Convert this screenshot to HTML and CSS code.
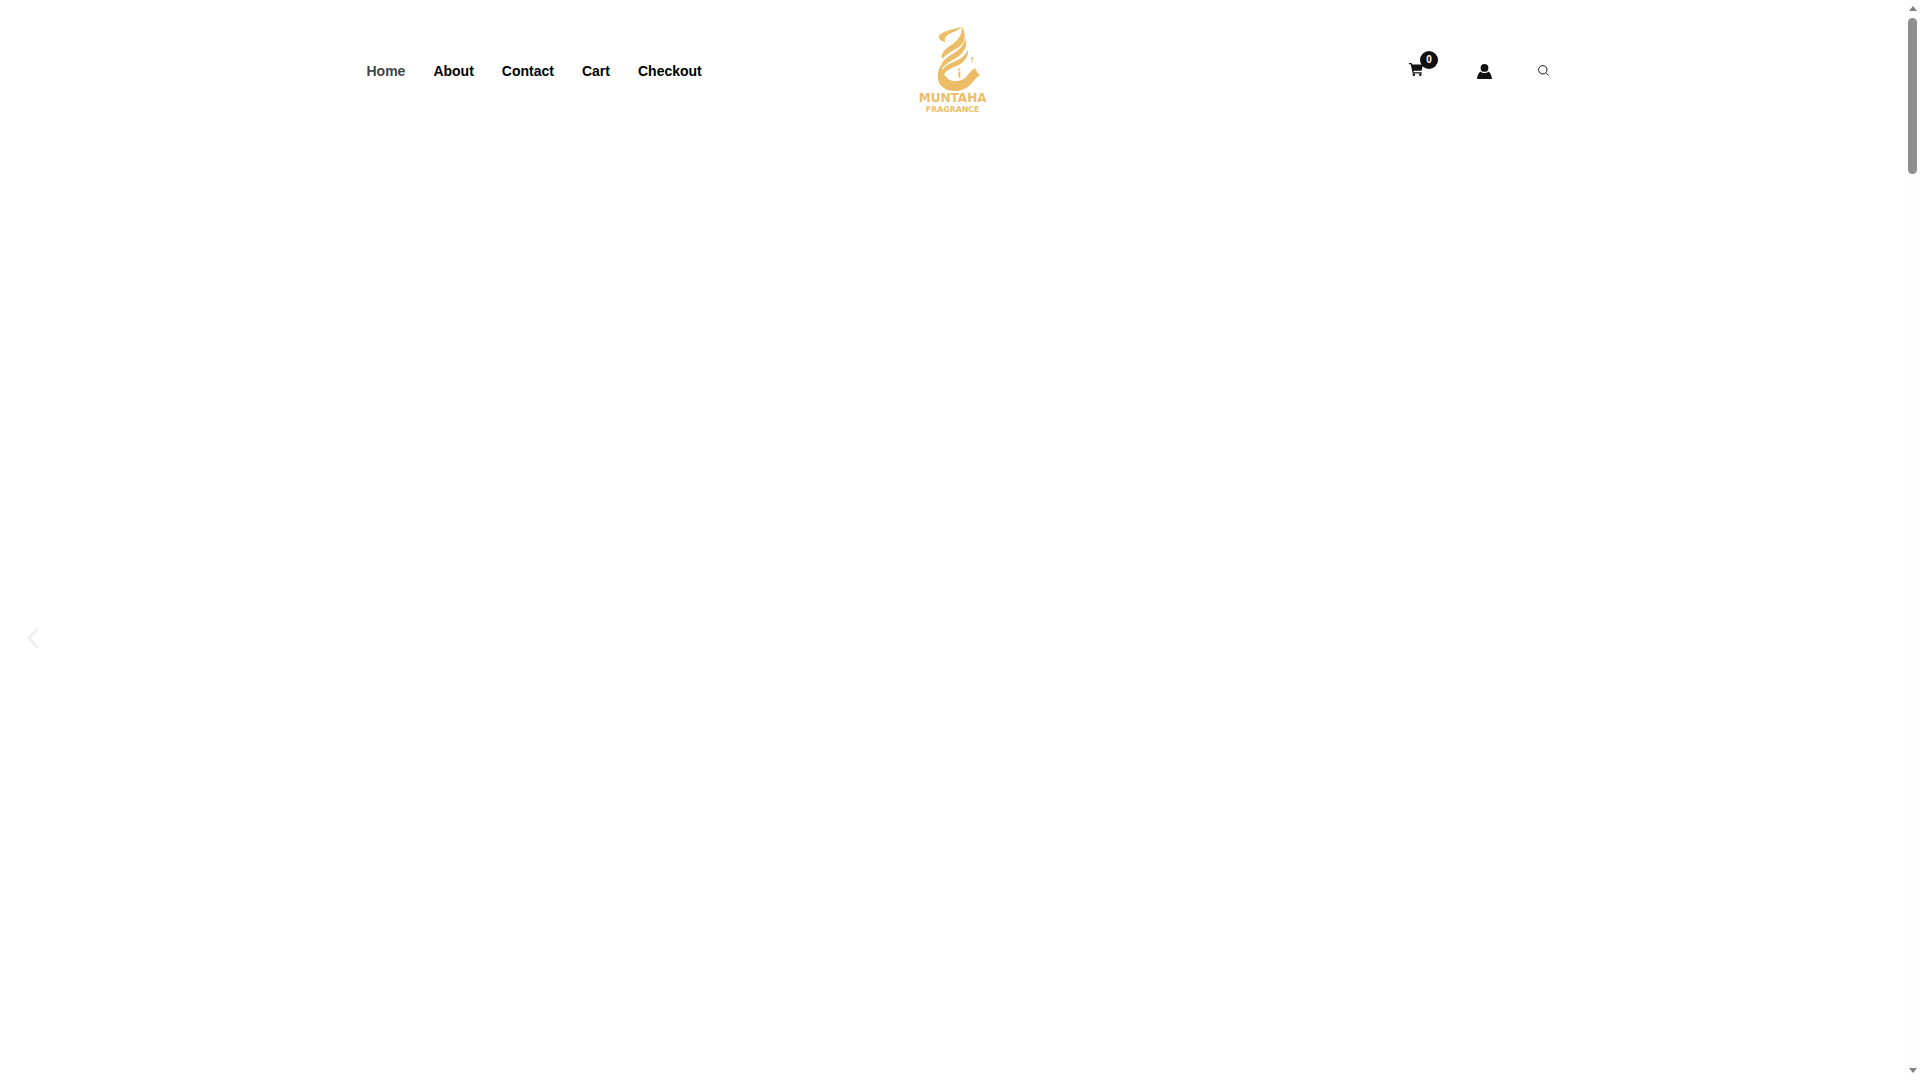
FILE: index.html
```html
<!DOCTYPE html>
<html lang="en">
<head>
    <meta charset="UTF-8">
    <meta name="viewport" content="width=device-width, initial-scale=1.0">
    <title>Muntaha Fragrance</title>
    <link rel="stylesheet" href="styles.css">
</head>
<body>

    <header class="site-header">
        <nav class="main-nav">
            <a class="active" href="#home">Home</a>
            <a href="#about">About</a>
            <a href="#contact">Contact</a>
            <a href="#cart">Cart</a>
            <a href="#checkout">Checkout</a>
        </nav>

        <a class="logo" href="#home">
            <svg viewBox="0 0 330 330" width="110" height="110" aria-label="Muntaha Fragrance">
                <g fill="#ecbd66">
                    <path d="M118 60C138 44 165 42 186 35 178 46 160 50 146 58 136 64 132 72 136 82 122 78 112 70 118 60z"/>
                    <path d="M186 36C196 52 198 72 186 88 172 104 146 110 126 132 122 112 138 100 154 90 172 78 186 62 186 36z"/>
                    <path d="M196 70C204 92 194 110 176 124 160 136 138 142 124 164 120 142 136 130 156 118 176 106 192 92 196 70z"/>
                    <path d="M204 104C206 124 194 140 176 150 160 158 140 162 128 184 120 164 134 152 154 144 176 134 196 124 204 104z"/>
                    <path d="M122 150C108 176 110 206 132 220 154 234 190 230 210 210 220 200 228 188 240 180 232 176 230 168 226 160 214 164 208 176 200 184 186 198 168 202 152 196 136 190 128 172 122 150z"/>
                    <circle cx="217" cy="130" r="3.500"/>
                    <circle cx="216" cy="139" r="2.500"/>
                    <circle cx="178" cy="163" r="3.500"/>
                    <rect x="175" y="170" width="6" height="18"/>
                </g>
                <text class="logo-name" x="158" y="261">MUNTAHA</text>
                <text class="logo-sub" x="158" y="291">FRAGRANCE</text>
            </svg>
        </a>

        <div class="header-icons">
            <a class="cart-link" href="#cart">
                <svg viewBox="0 0 14 13" width="14" height="13">
                    <path fill="#111" d="M0 0h2.600l.5 1.600H14l-1.400 6.200H4.500l.3 1.400h8v1.200H3.700L1.700 1.200H0z"/>
                    <circle fill="#111" cx="4.800" cy="11.700" r="1.300"/>
                    <circle fill="#111" cx="11.300" cy="11.700" r="1.300"/>
                </svg>
                <span class="cart-count">0</span>
            </a>
            <a class="user-link" href="#account">
                <svg viewBox="0 0 15 15" width="15" height="15">
                    <circle fill="#111" cx="7.500" cy="3.900" r="3.900"/>
                    <path fill="#111" d="M3.600 7.400C1.400 8.500.4 11.500 0 15h15c-.4-3.500-1.400-6.500-3.600-7.600-1 1-2.400 1.500-3.900 1.500s-2.900-.5-3.900-1.500z"/>
                </svg>
            </a>
            <a class="search-link" href="#search">
                <svg viewBox="0 0 11 11" width="11" height="11">
                    <circle cx="4.800" cy="4.800" r="4.200" fill="none" stroke="#111" stroke-width="1"/>
                    <path d="M8.300 8.300l2.200 2.200" stroke="#111" stroke-width="1"/>
                </svg>
            </a>
        </div>
    </header>

    <section class="hero">
        <button class="slide-prev" type="button" aria-label="Previous">
            <svg viewBox="0 0 12 22" width="12" height="22">
                <path d="M10.500 1.500L2 11l8.500 9.500" fill="none" stroke="#efefef" stroke-width="3"/>
            </svg>
        </button>
    </section>

    <div class="scrollbar">
        <span class="arrow-up"></span>
        <span class="thumb"></span>
        <span class="arrow-down"></span>
    </div>

</body>
</html>
```

FILE: styles.css
```css
html, body {
    margin: 0;
    padding: 0;
    height: 100%;
    overflow: hidden;
}

body {
    font-family: "Liberation Sans", Arial, sans-serif;
    background-color: #fff;
    color: #111;
}

.site-header {
    display: flex;
    align-items: flex-start;
    height: 140px;
    padding: 15px 0 0 366px;
    box-sizing: border-box;
}

.main-nav {
    display: flex;
    gap: 28px;
    width: 534px;
    padding-top: 48px;
    margin-left: 0.5px;
    margin-right: -0.5px;
}

.main-nav a {
    color: #000;
    font-size: 14px;
    font-weight: 700;
    line-height: 16px;
    text-decoration: none;
}

.main-nav a.active {
    color: #444;
}

.logo {
    display: block;
    width: 110px;
    height: 110px;
}

.logo-name, .logo-sub {
    fill: #ecbd66;
    font-family: "DejaVu Sans", sans-serif;
    font-weight: 700;
    text-anchor: middle;
}

.logo-name {
    font-size: 36px;
}

.logo-sub {
    font-size: 23.5px;
}

.header-icons {
    display: flex;
    align-items: flex-start;
    margin-left: 399px;
    padding-top: 48px;
}

.header-icons a {
    display: block;
    line-height: 0;
}

.cart-link {
    position: relative;
    width: 14px;
    height: 13px;
}

.cart-count {
    position: absolute;
    top: -12px;
    left: 11px;
    width: 18px;
    height: 18px;
    border-radius: 50%;
    background-color: #111;
    color: #fff;
    font-size: 10px;
    font-weight: 700;
    line-height: 18px;
    text-align: center;
}

.user-link {
    margin-left: 54px;
    margin-top: 1px;
}

.search-link {
    margin-left: 46px;
    margin-top: 2px;
}

.hero {
    position: relative;
    height: 940px;
}

.slide-prev {
    position: absolute;
    top: 487px;
    left: 27px;
    padding: 0;
    border: none;
    background: none;
    line-height: 0;
}

.scrollbar {
    position: fixed;
    top: 0;
    right: 0;
    bottom: 0;
    width: 15px;
    background-color: #fdfdfd;
    display: flex;
    flex-direction: column;
    align-items: center;
}

.arrow-up {
    width: 0;
    height: 0;
    margin-top: 6px;
    border-left: 4px solid transparent;
    border-right: 4px solid transparent;
    border-bottom: 5px solid #808080;
}

.thumb {
    width: 9px;
    height: 156px;
    margin-top: 7px;
    border-radius: 5px;
    background-color: #8e8e8e;
}

.arrow-down {
    width: 0;
    height: 0;
    margin-top: auto;
    margin-bottom: 7px;
    border-left: 4px solid transparent;
    border-right: 4px solid transparent;
    border-top: 5px solid #808080;
}
```
